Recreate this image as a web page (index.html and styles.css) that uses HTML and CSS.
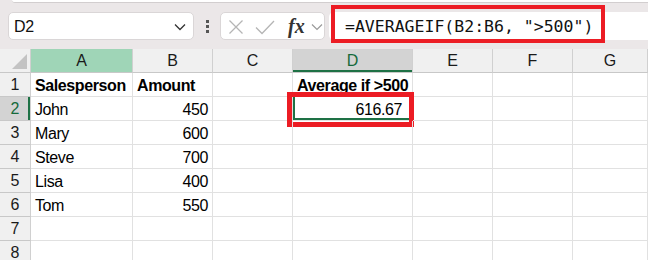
FILE: index.html
```html
<!DOCTYPE html>
<html>
<head>
<meta charset="utf-8">
<link rel="stylesheet" href="styles.css">
</head>
<body>
<div class="app">
  <div class="toolbar">
    <div class="strip"></div>
    <div class="bar">
      <div class="namebox">
        <span class="ref">D2</span>
        <svg class="chev" width="12" height="8" viewBox="0 0 12 8"><polyline points="1,1.5 6,6.5 11,1.5" fill="none" stroke="#333" stroke-width="1.3"/></svg>
      </div>
      <div class="dots"><i></i><i></i><i></i></div>
      <div class="fxbox">
        <svg class="icon-x" width="16" height="16" viewBox="0 0 16 16"><path d="M1.5 1.5 L14.5 14.5 M14.5 1.5 L1.5 14.5" stroke="#b5b5b5" stroke-width="1.3" fill="none"/></svg>
        <svg class="icon-ok" width="20" height="16" viewBox="0 0 20 16"><polyline points="1,8.5 7,14.5 19,2" fill="none" stroke="#b5b5b5" stroke-width="1.3"/></svg>
        <span class="fx">fx</span>
        <svg class="chev-s" width="12" height="8" viewBox="0 0 12 8"><polyline points="1,1.5 6,6.5 11,1.5" fill="none" stroke="#9a9a9a" stroke-width="1.2"/></svg>
      </div>
      <div class="formula">
        <span class="ftext">=AVERAGEIF(B2:B6, "&gt;500")</span>
        <div class="redbox formula-mark"></div>
      </div>
    </div>
  </div>

  <div class="grid">
    <div class="corner"><span class="tri"></span></div>
    <div class="hd hd-a">A</div>
    <div class="hd">B</div>
    <div class="hd">C</div>
    <div class="hd hd-sel">D</div>
    <div class="hd">E</div>
    <div class="hd">F</div>
    <div class="hd">G</div>

    <div class="rh">1</div>
    <div class="c b">Salesperson</div>
    <div class="c b">Amount</div>
    <div class="c"></div>
    <div class="c b">Average if &gt;500</div>
    <div class="c"></div>
    <div class="c"></div>
    <div class="c"></div>

    <div class="rh rh-sel">2</div>
    <div class="c">John</div>
    <div class="c num">450</div>
    <div class="c"></div>
    <div class="c num sel">616.67<div class="redbox cell-mark"></div></div>
    <div class="c"></div>
    <div class="c"></div>
    <div class="c"></div>

    <div class="rh">3</div>
    <div class="c">Mary</div>
    <div class="c num">600</div>
    <div class="c"></div>
    <div class="c"></div>
    <div class="c"></div>
    <div class="c"></div>
    <div class="c"></div>

    <div class="rh">4</div>
    <div class="c">Steve</div>
    <div class="c num">700</div>
    <div class="c"></div>
    <div class="c"></div>
    <div class="c"></div>
    <div class="c"></div>
    <div class="c"></div>

    <div class="rh">5</div>
    <div class="c">Lisa</div>
    <div class="c num">400</div>
    <div class="c"></div>
    <div class="c"></div>
    <div class="c"></div>
    <div class="c"></div>
    <div class="c"></div>

    <div class="rh">6</div>
    <div class="c">Tom</div>
    <div class="c num">550</div>
    <div class="c"></div>
    <div class="c"></div>
    <div class="c"></div>
    <div class="c"></div>
    <div class="c"></div>

    <div class="rh">7</div>
    <div class="c"></div>
    <div class="c"></div>
    <div class="c"></div>
    <div class="c"></div>
    <div class="c"></div>
    <div class="c"></div>
    <div class="c"></div>

    <div class="rh">8</div>
    <div class="c"></div>
    <div class="c"></div>
    <div class="c"></div>
    <div class="c"></div>
    <div class="c"></div>
    <div class="c"></div>
    <div class="c"></div>
  </div>
</div>
</body>
</html>
```

FILE: styles.css
```css
* { box-sizing: border-box; }
html, body { margin: 0; padding: 0; }
body {
  width: 648px;
  height: 260px;
  overflow: hidden;
  background: #ffffff;
  font-family: "Liberation Sans", Arial, sans-serif;
  color: #000;
}
.app { width: 648px; height: 260px; overflow: hidden; }

/* ---------- toolbar ---------- */
.toolbar {
  height: 49px;
  background: #ebe7e8;
}
.strip {
  height: 3px;
  margin-left: 12px;
  background: #ffffff;
  border-bottom: 1px solid #d2cecf;
  border-bottom-left-radius: 4px;
}
.bar {
  display: flex;
  align-items: center;
  height: 28px;
  margin-top: 9px;
  padding-left: 8px;
}
.namebox {
  width: 186px;
  height: 28px;
  background: #fff;
  border: 1px solid #dad6d7;
  border-radius: 5px;
  display: flex;
  align-items: center;
  justify-content: space-between;
  padding: 0 7px 0 5px;
}
.ref { font-size: 16px; letter-spacing: -0.3px; color: #111; padding-top: 1px; }
.chev { margin-top: 2px; }
.dots {
  margin-left: 12px;
  width: 3px;
  display: flex;
  flex-direction: column;
  gap: 2px;
  padding-top: 1px;
}
.dots i { display: block; width: 3px; height: 3px; background: #555; }
.fxbox {
  margin-left: 11px;
  width: 105px;
  height: 28px;
  background: #fff;
  border: 1px solid #dad6d7;
  border-radius: 5px;
  display: flex;
  align-items: center;
  padding-left: 7px;
}
.icon-x { margin-top: 2px; }
.icon-ok { margin-left: 11px; margin-top: 1px; }
.fx {
  margin-left: 13px;
  font-family: "Liberation Serif", "Times New Roman", serif;
  font-style: italic;
  font-weight: bold;
  font-size: 20px;
  color: #333;
  line-height: 20px;
}
.chev-s { margin-left: 6px; margin-top: 2px; }
.formula {
  position: relative;
  margin-left: 4px;
  flex: 1;
  height: 28px;
  background: #fff;
  border-radius: 5px 0 0 5px;
  display: flex;
  align-items: center;
  padding-left: 16px;
}
.ftext {
  font-family: "DejaVu Sans Mono", "Liberation Mono", monospace;
  font-size: 16.5px;
  color: #111;
  white-space: pre;
  padding-top: 1px;
}
.redbox {
  position: absolute;
  border: 4px solid #ec1c24;
  pointer-events: none;
}
.formula-mark {
  left: 2px;
  top: -7px;
  width: 274px;
  height: 38px;
}

/* ---------- grid ---------- */
.grid {
  display: grid;
  grid-template-columns: 31px 102px 80px 80px 120px 80px 80px 1fr;
  grid-auto-rows: 24px;
}
.corner, .hd, .rh {
  background: #f0f0f0;
  border-right: 1px solid #d0d0d0;
  border-bottom: 1px solid #c8c8c8;
}
.corner { position: relative; }
.tri {
  position: absolute;
  right: 3px;
  bottom: 3px;
  width: 0;
  height: 0;
  border-left: 15px solid transparent;
  border-bottom: 15px solid #c3c3c3;
}
.hd {
  font-size: 16px;
  line-height: 23px;
  text-align: center;
  color: #1a1a1a;
}
.hd-a { background: #9fd5b7; }
.hd-sel {
  background: #d3d3d3;
  color: #166a3b;
  box-shadow: inset 0 -2px 0 #1e7145;
}
.rh {
  font-size: 16px;
  line-height: 24px;
  text-align: center;
  color: #1a1a1a;
}
.rh-sel {
  background: #d3d3d3;
  color: #166a3b;
  box-shadow: inset -2px 0 0 #1e7145;
}
.c {
  position: relative;
  border-right: 1px solid #e1e1e1;
  border-bottom: 1px solid #e1e1e1;
  font-size: 16px;
  letter-spacing: -0.4px;
  line-height: 25px;
  padding: 0 4px;
  white-space: nowrap;
  color: #000;
}
.b { font-weight: bold; }
.num { text-align: right; }
.sel {
  padding-right: 10px;
  box-shadow: inset 2px -2px 0 #1e7145;
}
.cell-mark {
  left: -6px;
  top: -5px;
  width: 127px;
  height: 35px;
  border-width: 5px;
  letter-spacing: 0;
}
```
